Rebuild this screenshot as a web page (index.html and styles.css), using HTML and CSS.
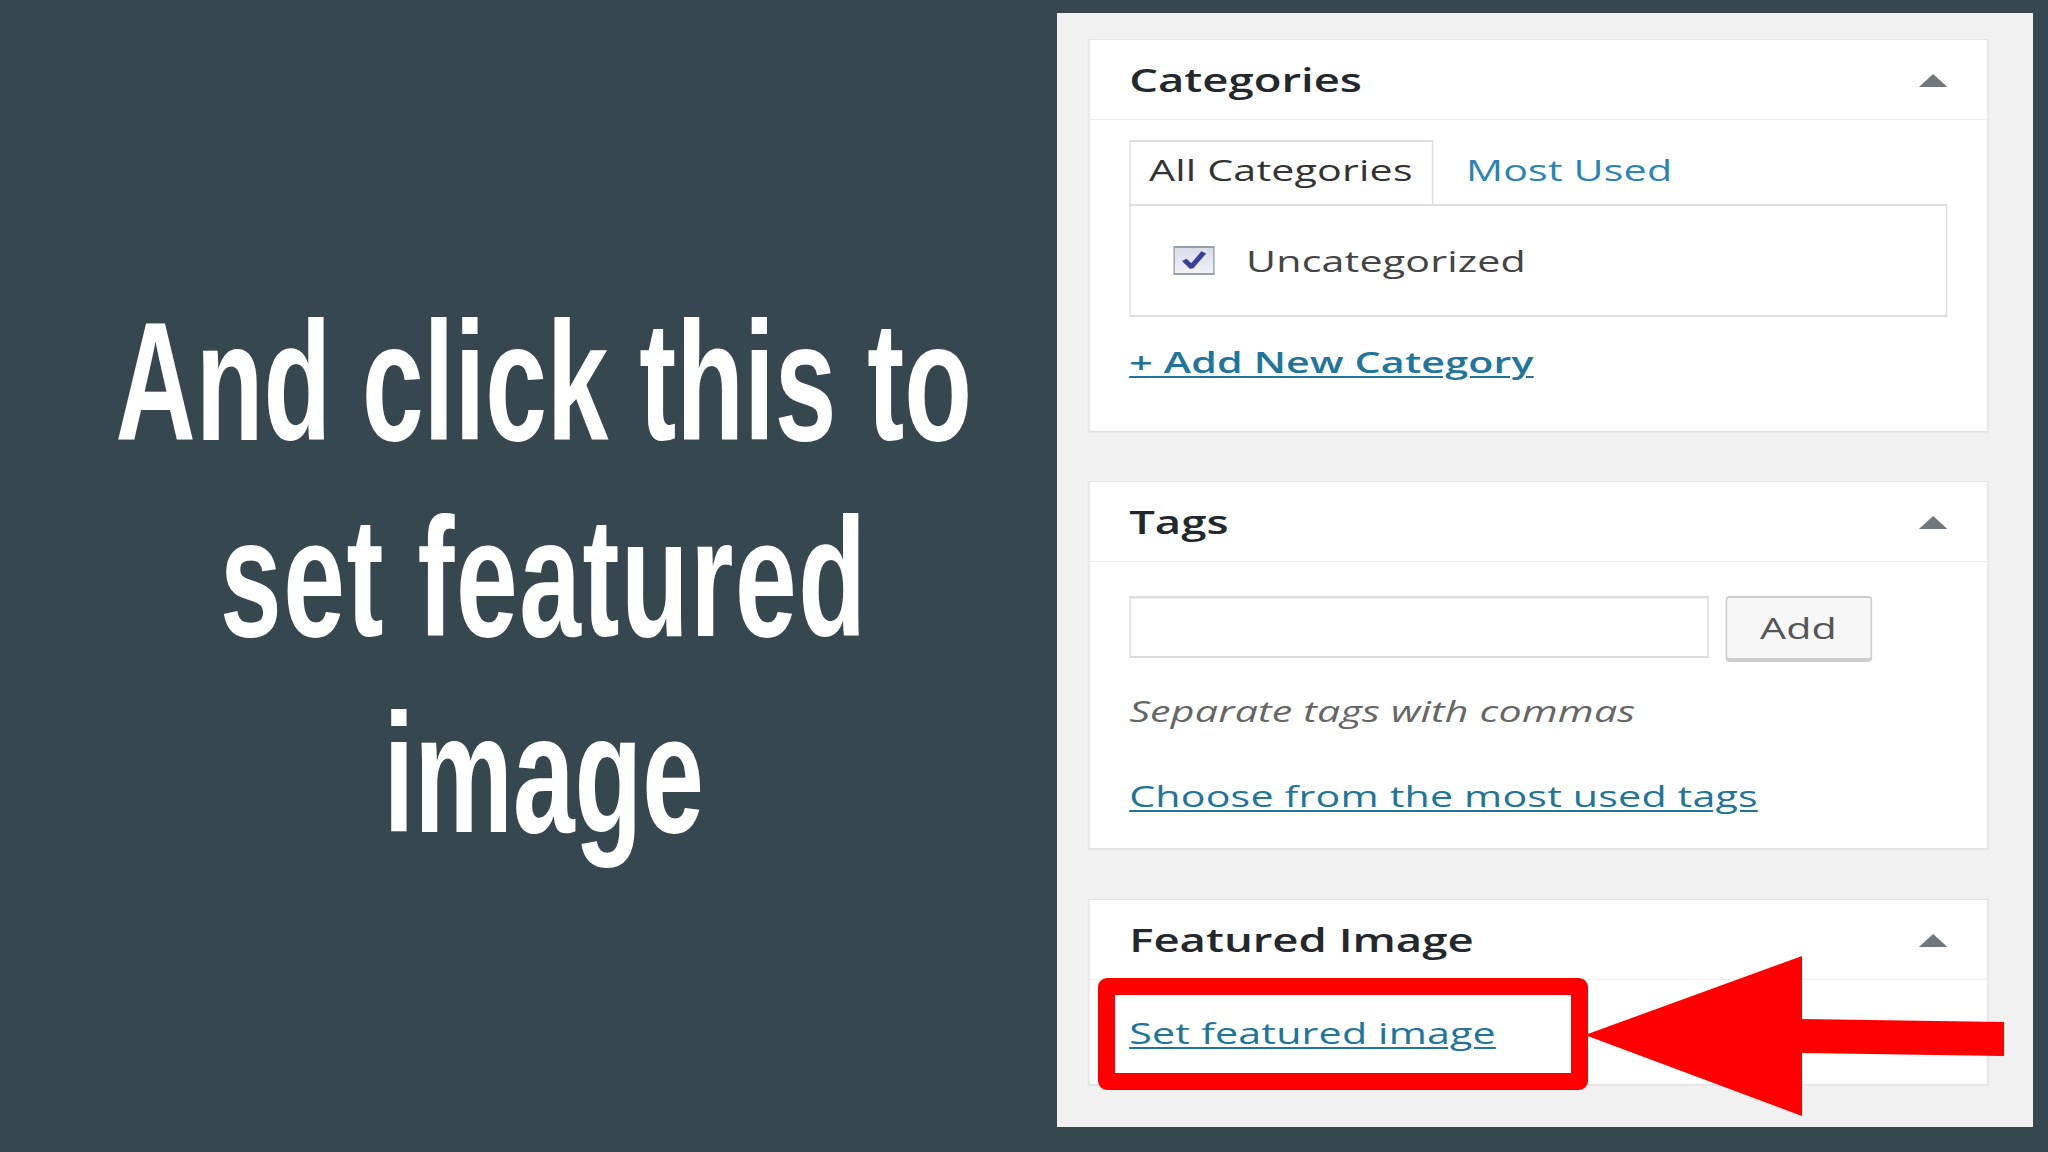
FILE: index.html
```html
<!DOCTYPE html>
<html lang="en">
<head>
<meta charset="utf-8">
<title>Set featured image</title>
<link rel="stylesheet" href="styles.css">
</head>
<body>
<main class="slide">
  <section class="caption">
    <h1 class="headline">
      <span>And click this to</span>
      <span class="wide">set featured</span>
      <span>image</span>
    </h1>
  </section>

  <section class="sidebar">
    <div class="sidebar-inner">
      <div class="postbox">
        <div class="postbox-header">
          <h2>Categories</h2>
          <span class="toggle"></span>
        </div>
        <div class="inside cat-inside">
          <ul class="tabs">
            <li class="tab active">All Categories</li>
            <li class="tab"><a class="link plain">Most Used</a></li>
          </ul>
          <div class="cat-list">
            <label class="cat-item">
              <span class="checkbox">
                <svg viewBox="0 0 20 20" width="100%" height="100%" aria-hidden="true"><path d="M4.5 9.5 L8.5 15 L15.5 3.5" fill="none" stroke="#3a3f9c" stroke-width="3.2" stroke-linejoin="round"/></svg>
              </span>
              Uncategorized
            </label>
          </div>
          <a class="link strong add-cat">+ Add New Category</a>
        </div>
      </div>

      <div class="postbox">
        <div class="postbox-header">
          <h2>Tags</h2>
          <span class="toggle"></span>
        </div>
        <div class="inside tags-inside">
          <div class="tag-row">
            <span class="tag-input"></span>
            <span class="button">Add</span>
          </div>
          <p class="howto">Separate tags with commas</p>
          <a class="link choose">Choose from the most used tags</a>
        </div>
      </div>

      <div class="postbox featured">
        <div class="postbox-header">
          <h2>Featured Image</h2>
          <span class="toggle"></span>
        </div>
        <div class="inside feat-inside">
          <a class="link">Set featured image</a>
        </div>
      </div>
    </div>
  </section>

  <div class="annot-box"></div>
  <svg class="annot-arrow" viewBox="0 0 430 172" aria-hidden="true">
    <polygon points="5,85 222,6 222,69 424,72 424,106 222,103 222,166" fill="#ff0000"/>
  </svg>
</main>
</body>
</html>
```

FILE: styles.css
```css
html, body {
  margin: 0;
  padding: 0;
}

body {
  width: 2048px;
  height: 1152px;
  overflow: hidden;
  background: #37474f;
}

.slide {
  position: relative;
  width: 2048px;
  height: 1152px;
  display: flex;
  background: #37474f;
  overflow: hidden;
}

/* ---------- left caption ---------- */
.caption {
  flex: none;
  width: 1057px;
  box-sizing: border-box;
  padding-left: 31px;
  display: flex;
  align-items: center;
  justify-content: center;
}

.headline {
  flex: none;
  margin: 4px 0 0 0;
  display: flex;
  flex-direction: column;
  align-items: center;
  font-family: "Liberation Sans", Arial, sans-serif;
  font-weight: 700;
  font-size: 168px;
  line-height: 196px;
  color: #ffffff;
  white-space: nowrap;
  transform: scaleX(0.66);
  transform-origin: 50% 50%;
}

.headline span {
  display: block;
}

.headline .wide {
  letter-spacing: 2.4px;
}

/* ---------- right WP sidebar ---------- */
.sidebar {
  flex: none;
  width: 976px;
  height: 1114px;
  margin-top: 13px;
  background: #f1f1f1;
}

.sidebar-inner {
  width: 687.3px;
  box-sizing: border-box;
  padding: 26px 0 0 21.83px;
  display: flex;
  flex-direction: column;
  gap: 49px;
  transform: scaleX(1.42);
  transform-origin: 0 0;
  font-family: "Open Sans", "Noto Sans", sans-serif;
  font-size: 29px;
  line-height: 40px;
  color: #444;
}

.postbox {
  width: 633.8px;
  box-sizing: border-box;
  background: #ffffff;
  border-style: solid;
  border-color: #e3e3e3;
  border-width: 1px 0.7px;
  box-shadow: 0 1px 1px rgba(0, 0, 0, 0.05);
}

.postbox.featured {
  margin-top: 1px;
}

.postbox-header {
  height: 80px;
  box-sizing: border-box;
  padding: 0 28px;
  display: flex;
  align-items: center;
  justify-content: space-between;
  border-bottom: 1px solid #eeeeee;
}

.postbox-header h2 {
  margin: 0;
  font-size: 32px;
  font-weight: 600;
  line-height: 44px;
  color: #23282d;
}

.toggle {
  width: 0;
  height: 0;
  border-left: 10.5px solid transparent;
  border-right: 10.5px solid transparent;
  border-bottom: 13px solid #72777c;
  margin-top: 1px;
}

.inside {
  padding: 0 28px;
  letter-spacing: 0.12px;
}

.cat-inside {
  padding-top: 20px;
  padding-bottom: 49px;
}

.tags-inside {
  padding-top: 34px;
  padding-bottom: 32px;
}

.feat-inside {
  padding-top: 33px;
  padding-bottom: 31px;
}

/* tabs */
.tabs {
  margin: 0;
  padding: 0;
  list-style: none;
  display: flex;
}

.tab {
  height: 64px;
  box-sizing: border-box;
  padding: 8px 13px 0;
  border-style: solid;
  border-color: transparent;
  border-width: 2px 1.4px 0;
  color: #333;
}

.tab.active {
  border-color: #dedede;
  background: #ffffff;
}

.tab + .tab {
  margin-left: 9.5px;
}

.cat-list {
  height: 113px;
  box-sizing: border-box;
  border-style: solid;
  border-color: #dedede;
  border-width: 2px 1.4px;
  padding-left: 30.3px;
  display: flex;
  align-items: center;
}

.cat-item {
  display: flex;
  align-items: center;
  color: #444;
}

.checkbox {
  width: 29px;
  height: 29px;
  box-sizing: border-box;
  margin-right: 22px;
  border-style: solid;
  border-color: #9aa0a6;
  border-width: 2px 1.4px;
  background: linear-gradient(#d9dcea, #f1f2f7);
  display: block;
}

.checkbox svg {
  display: block;
}

/* links */
.link {
  color: #21759b;
  text-decoration: underline;
  text-underline-offset: 3px;
  text-decoration-thickness: 2px;
  display: block;
  width: max-content;
}

.link.plain {
  color: #2a84b8;
  text-decoration: none;
}

.link.strong {
  font-weight: 600;
}

.add-cat {
  margin-top: 25px;
}

/* tags */
.tag-row {
  display: flex;
  align-items: flex-start;
  gap: 11.3px;
}

.tag-input {
  display: block;
  width: 408.5px;
  height: 62px;
  box-sizing: border-box;
  border-style: solid;
  border-color: #dcdcdc;
  border-width: 2px 1.4px;
  background: #ffffff;
  box-shadow: inset 0 1px 2px rgba(0, 0, 0, 0.07);
}

.button {
  display: flex;
  align-items: center;
  justify-content: center;
  width: 103px;
  height: 64px;
  box-sizing: border-box;
  border-style: solid;
  border-color: #cccccc;
  border-width: 2px 1.4px;
  border-radius: 3px;
  background: #f7f7f7;
  box-shadow: 0 2px 0 #cccccc;
  color: #555;
}

.howto {
  margin: 31px 0 0;
  font-style: italic;
  color: #666;
}

.choose {
  margin-top: 45px;
}

/* ---------- annotation overlay ---------- */
.annot-box {
  position: absolute;
  left: 1098px;
  top: 978px;
  width: 490px;
  height: 112px;
  box-sizing: border-box;
  border: 17px solid #ff0000;
  border-radius: 9px;
}

.annot-arrow {
  position: absolute;
  left: 1580px;
  top: 950px;
  width: 430px;
  height: 172px;
}
```
